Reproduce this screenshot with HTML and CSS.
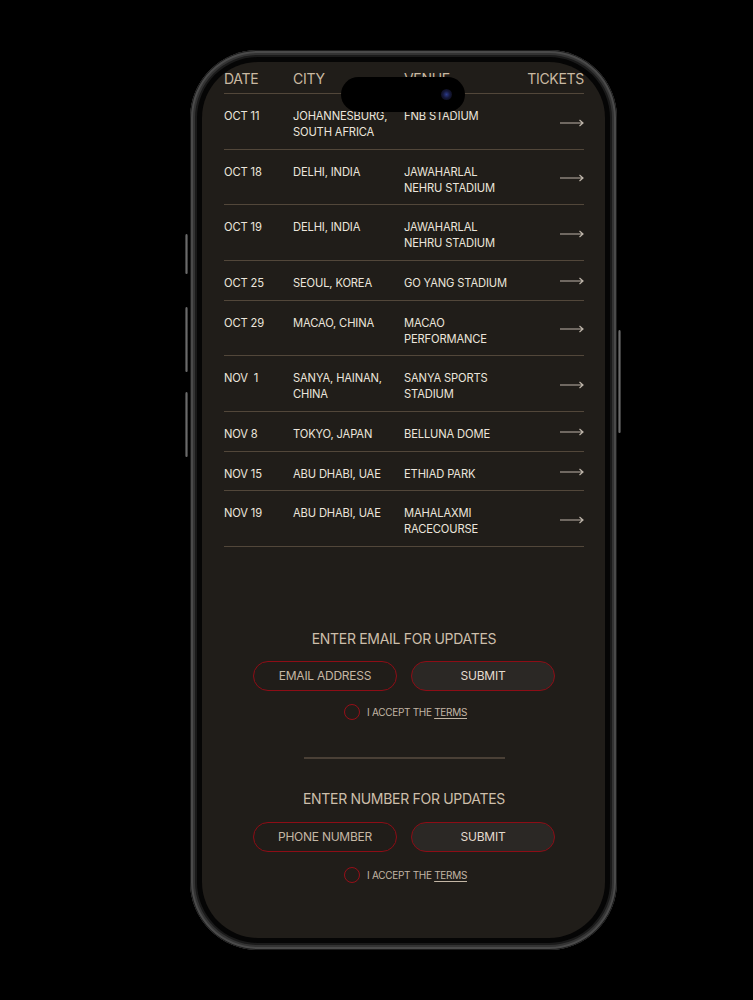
FILE: index.html
```html
<!DOCTYPE html>
<html lang="en">

<head>
    <meta charset="UTF-8" />
    <meta name="viewport" content="width=device-width, initial-scale=1.0" />
    <title>World Tour</title>
    <link rel="stylesheet" href="styles.css">
</head>

<body>

    <div class="stage">
        <div class="phone">
            <!-- Hardware buttons -->
            <span class="side-btn" id="btn-action"></span>
            <span class="side-btn" id="btn-vol-up"></span>
            <span class="side-btn" id="btn-vol-down"></span>
            <span class="side-btn" id="btn-power"></span>

            <div class="screen">
                <div class="island"><span class="lens"></span></div>

                <!-- Tour dates -->
                <div class="tour">
                    <div class="tour-head">
                        <span>DATE</span>
                        <span>CITY</span>
                        <span>VENUE</span>
                        <span class="tickets">TICKETS</span>
                    </div>
                    <div id="rows"></div>
                </div>

                <!-- Email signup -->
                <section class="signup">
                    <h2>ENTER EMAIL FOR UPDATES</h2>
                    <div class="pill-row">
                        <div class="pill field">EMAIL ADDRESS</div>
                        <button class="pill submit">SUBMIT</button>
                    </div>
                    <label class="terms"><span class="check"></span><span>I ACCEPT THE <u>TERMS</u></span></label>
                </section>

                <hr class="divider">

                <!-- SMS signup -->
                <section class="signup second">
                    <h2>ENTER NUMBER FOR UPDATES</h2>
                    <div class="pill-row">
                        <div class="pill field">PHONE NUMBER</div>
                        <button class="pill submit">SUBMIT</button>
                    </div>
                    <label class="terms"><span class="check"></span><span>I ACCEPT THE <u>TERMS</u></span></label>
                </section>
            </div>
        </div>
    </div>

    <script>
        const shows = [
            ['OCT 11', 'JOHANNESBURG,<br>SOUTH AFRICA', 'FNB STADIUM'],
            ['OCT 18', 'DELHI, INDIA', 'JAWAHARLAL<br>NEHRU STADIUM'],
            ['OCT 19', 'DELHI, INDIA', 'JAWAHARLAL<br>NEHRU STADIUM'],
            ['OCT 25', 'SEOUL, KOREA', 'GO YANG STADIUM'],
            ['OCT 29', 'MACAO, CHINA', 'MACAO<br>PERFORMANCE'],
            ['NOV&nbsp; 1', 'SANYA, HAINAN,<br>CHINA', 'SANYA SPORTS<br>STADIUM'],
            ['NOV 8', 'TOKYO, JAPAN', 'BELLUNA DOME'],
            ['NOV 15', 'ABU DHABI, UAE', 'ETHIAD PARK'],
            ['NOV 19', 'ABU DHABI, UAE', 'MAHALAXMI<br>RACECOURSE']
        ];

        const arrow = '<svg width="24" height="8" viewBox="0 0 24 8"><path d="M0 4H23M19.5 1L23 4L19.5 7" fill="none" stroke="#bdb4a9" stroke-width="1.2"/></svg>';

        const rows = document.getElementById('rows');
        shows.forEach(([date, city, venue]) => {
            const row = document.createElement('div');
            row.className = 'tour-row';
            row.innerHTML = `<span>${date}</span><span>${city}</span><span>${venue}</span><a class="go" href="#">${arrow}</a>`;
            rows.appendChild(row);
        });
    </script>
</body>

</html>
```

FILE: styles.css
```css
* {
    box-sizing: border-box;
    margin: 0;
    padding: 0;
    font-family: Inter, 'Noto Sans', sans-serif;
}

body {
    background-color: #000;
    height: 1000px;
    overflow: hidden;
}

.stage {
    padding: 50px 0 0 190px;
}

/* Phone body */

.phone {
    position: relative;
    width: 427px;
    height: 900px;
    padding: 12px;
    border-radius: 68px;
    background: #050505;
    box-shadow: inset 0 0 0 1px #1c1c1c, inset 0 0 0 3px #4a4a4a, inset 0 0 0 5px #333, inset 0 0 0 7px #1a1a1a;
}

.side-btn {
    position: absolute;
    width: 3px;
    border-radius: 2px;
    background: linear-gradient(to right, #2a2a2a, #6a6a6a, #2a2a2a);
}

#btn-action {
    left: -5px;
    top: 184px;
    height: 40px;
}

#btn-vol-up {
    left: -5px;
    top: 257px;
    height: 65px;
}

#btn-vol-down {
    left: -5px;
    top: 342px;
    height: 65px;
}

#btn-power {
    right: -4px;
    top: 280px;
    height: 103px;
}

.screen {
    position: relative;
    height: 100%;
    border-radius: 56px;
    overflow: hidden;
    background: #201d19;
    padding: 0 21px 0 22px;
}

.island {
    position: absolute;
    top: 15px;
    left: 139px;
    width: 124px;
    height: 35px;
    border-radius: 18px;
    background: #000;
    z-index: 2;
}

.lens {
    position: absolute;
    top: 12px;
    left: 100px;
    width: 11px;
    height: 11px;
    border-radius: 50%;
    background: radial-gradient(circle, #2b3a8a 0, #15183a 45%, #07070d 100%);
}

/* Tour table */

.tour-head,
.tour-row {
    display: grid;
    grid-template-columns: 69px 111px 1fr auto;
    align-items: start;
    border-bottom: 1px solid #52473a;
}

.tour-head {
    padding: 8px 0 6px;
    font-size: 14px;
    line-height: 17px;
    color: #c9b9a2;
    letter-spacing: -0.3px;
}

.tour-head .tickets {
    text-align: right;
}

.tour-row {
    padding: 14px 0 8.67px;
    font-size: 11.2px;
    line-height: 16px;
    color: #ebe5dc;
    letter-spacing: -0.15px;
}

.go {
    align-self: center;
    display: flex;
    margin-top: -3px;
    text-decoration: none;
}

/* Signup forms */

.signup {
    margin-top: 83px;
    display: flex;
    flex-direction: column;
    align-items: center;
}

.signup.second {
    margin-top: 31px;
}

.signup h2 {
    font-size: 14px;
    line-height: 18px;
    font-weight: 400;
    color: #cdbfab;
    letter-spacing: -0.3px;
}

.pill-row {
    display: flex;
    gap: 14px;
    margin-top: 13px;
}

.second .pill-row {
    margin-top: 14px;
}

.pill {
    width: 144px;
    height: 30px;
    border: 1px solid #8d0d16;
    border-radius: 15px;
    display: flex;
    align-items: center;
    justify-content: center;
    font-size: 12px;
    letter-spacing: -0.25px;
}

.field {
    color: #c5b7a4;
    background: transparent;
}

.submit {
    color: #e4dbcf;
    background: #2b2825;
}

.terms {
    display: flex;
    align-items: center;
    gap: 7px;
    margin-top: 13px;
    margin-left: 3px;
    font-size: 10px;
    line-height: 16px;
    color: #c3b6a5;
    letter-spacing: -0.3px;
}

.second .terms {
    margin-top: 15px;
}

.terms u {
    text-underline-offset: 2px;
}

.check {
    width: 16px;
    height: 16px;
    border: 1.5px solid #960f18;
    border-radius: 50%;
}

.divider {
    width: 201px;
    margin: 37px auto 0;
    border: none;
    border-top: 2px solid #4a4036;
}
```
